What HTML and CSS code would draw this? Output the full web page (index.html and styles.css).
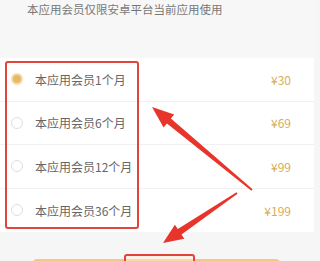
FILE: index.html
```html
<!DOCTYPE html>
<html lang="zh-CN">
<head>
<meta charset="utf-8">
<title>会员</title>
<link rel="stylesheet" href="styles.css">
</head>
<body>
<div class="page">
  <div class="notice">本应用会员仅限安卓平台当前应用使用</div>
  <ul class="plans">
    <li class="plan"><span class="radio checked"></span><span class="name">本应用会员1个月</span><span class="price">¥30</span></li>
    <li class="plan"><span class="radio"></span><span class="name">本应用会员6个月</span><span class="price">¥69</span></li>
    <li class="plan"><span class="radio"></span><span class="name">本应用会员12个月</span><span class="price">¥99</span></li>
    <li class="plan"><span class="radio"></span><span class="name">本应用会员36个月</span><span class="price">¥199</span></li>
  </ul>
  <div class="footer">
    <div class="buy"></div>
  </div>
  <div class="mark mark-plans"></div>
  <div class="mark mark-buy"></div>
  <svg class="arrows" width="314" height="261" viewBox="0 0 314 261">
    <polygon fill="#e8352c" points="252.6,189.3 170.9,118.6 174.2,114.6 152,107 163.6,127.6 166.9,123.6 251.4,190.7"/>
    <polygon fill="#e8352c" points="236.5,192.2 177.8,229 174.9,224.8 163,243 184.3,238.7 181.5,234.5 237.5,193.8"/>
  </svg>
</div>
</body>
</html>
```
FILE: styles.css
```css
html, body {
  margin: 0;
  padding: 0;
  background: #f6f6f6;
}
.page {
  position: relative;
  width: 314px;
  height: 261px;
  overflow: hidden;
  font-family: "Noto Sans CJK SC", "Noto Sans", sans-serif;
}
.notice {
  height: 58px;
  box-sizing: border-box;
  padding: 2px 0 0 27px;
  font-size: 11.5px;
  line-height: 15px;
  color: #777;
  background: #f7f7f7;
}
.plans {
  list-style: none;
  margin: 0;
  padding: 0;
  background: #fff;
}
.plan {
  display: flex;
  align-items: center;
  height: 43.5px;
  box-sizing: border-box;
  padding: 0 23px 0 11px;
  border-bottom: 1px solid #f1f1f1;
}
.plan:last-child {
  border-bottom: none;
}
.radio {
  width: 12px;
  height: 12px;
  box-sizing: border-box;
  border-radius: 50%;
  border: 1px solid #dedede;
  margin-right: 12px;
  flex: none;
}
.radio.checked {
  border: 2px solid #f4dcae;
  background: #e8b866;
}
.name {
  flex: 1;
  font-size: 12px;
  color: #666;
}
.price {
  font-size: 12px;
  color: #d6ad58;
}
.footer {
  height: 40px;
  padding: 27px 34px 0 33px;
  background: #f6f6f6;
}
.buy {
  height: 40px;
  border-radius: 4px;
  background: #f3c785;
}
.mark {
  position: absolute;
  box-sizing: border-box;
  border: 2.5px solid #e0443b;
  border-radius: 3px;
}
.mark-plans {
  left: 5px;
  top: 61px;
  width: 134px;
  height: 168px;
}
.mark-buy {
  left: 124px;
  top: 254px;
  width: 71px;
  height: 20px;
  background: rgba(255, 235, 210, 0.5);
}
.arrows {
  position: absolute;
  left: 0;
  top: 0;
}
```
